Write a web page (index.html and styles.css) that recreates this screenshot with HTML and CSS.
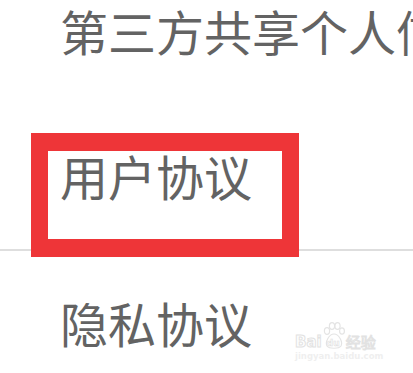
FILE: index.html
```html
<!DOCTYPE html>
<html lang="zh-CN">
<head>
<meta charset="utf-8">
<title>协议</title>
<link rel="stylesheet" href="styles.css">
</head>
<body>
<div class="list">
  <div class="row">第三方共享个人信息</div>
  <div class="row row-divided">用户协议<span class="mark"></span></div>
  <div class="row">隐私协议</div>
</div>
<div class="watermark">
  <div class="wm-logo">
    <span class="wm-bai">Bai</span>
    <span class="wm-paw">
      <svg width="22" height="28" viewBox="0 0 22 28">
        <g fill="none" stroke="#e4e4e4" stroke-width="1.2">
          <ellipse cx="4" cy="9" rx="2.6" ry="3.4"/>
          <ellipse cx="9" cy="4" rx="2.6" ry="3.4"/>
          <ellipse cx="14.5" cy="4" rx="2.6" ry="3.4"/>
          <ellipse cx="19" cy="9" rx="2.4" ry="3.2"/>
          <path d="M11 12 C6 12 2 20 4 24 C6 27 16 27 18 24 C20 20 16 12 11 12 Z"/>
        </g>
      </svg>
      <span class="wm-du">du</span>
    </span>
    <span class="wm-jy">经验</span>
  </div>
  <div class="wm-url">jingyan.baidu.com</div>
</div>
</body>
</html>
```
FILE: styles.css
```css
html, body {
  margin: 0;
  padding: 0;
  background: #ffffff;
}
body {
  width: 413px;
  height: 373px;
  overflow: hidden;
  position: relative;
  font-family: "Noto Sans CJK SC", "Noto Sans", sans-serif;
}
.list {
  display: flex;
  flex-direction: column;
  margin-top: -41px;
  height: 414px;
  overflow: hidden;
}
.row {
  position: relative;
  flex: none;
  height: 146px;
  display: flex;
  align-items: center;
  padding-left: 60px;
  padding-bottom: 4px;
  font-size: 48px;
  line-height: 48px;
  color: #636363;
  white-space: nowrap;
  overflow: hidden;
  box-sizing: border-box;
}
.row-divided {
  overflow: visible;
  border-bottom: 2px solid #dedede;
}
.mark {
  position: absolute;
  left: 31px;
  top: 28px;
  width: 268px;
  height: 124px;
  box-sizing: border-box;
  border: 18px solid #ee3538;
  border-left-width: 17px;
  border-right-width: 17px;
}
.watermark {
  position: absolute;
  left: 295px;
  top: 320px;
  width: 92px;
  display: flex;
  flex-direction: column;
  align-items: flex-start;
  gap: 1px;
  color: #ececec;
}
.wm-logo {
  display: flex;
  align-items: flex-end;
  height: 30px;
}
.wm-bai {
  font-family: "DejaVu Sans", sans-serif;
  font-weight: bold;
  font-size: 15px;
  line-height: 15px;
  color: #ffffff;
  -webkit-text-stroke: 1px #e2e2e2;
  margin-right: 1px;
}
.wm-paw {
  position: relative;
  width: 22px;
  height: 28px;
}
.wm-paw svg {
  display: block;
}
.wm-du {
  position: absolute;
  left: 4px;
  bottom: 2px;
  font-family: "DejaVu Sans", sans-serif;
  font-size: 9px;
  line-height: 9px;
  font-weight: bold;
  color: #ffffff;
  -webkit-text-stroke: 0.6px #e0e0e0;
}
.wm-jy {
  font-size: 15px;
  line-height: 16px;
  color: #ffffff;
  -webkit-text-stroke: 1px #e2e2e2;
  margin-left: 1px;
}
.wm-url {
  font-family: "DejaVu Sans", sans-serif;
  font-size: 8.5px;
  line-height: 10px;
  font-weight: bold;
  color: #efefef;
}
```
